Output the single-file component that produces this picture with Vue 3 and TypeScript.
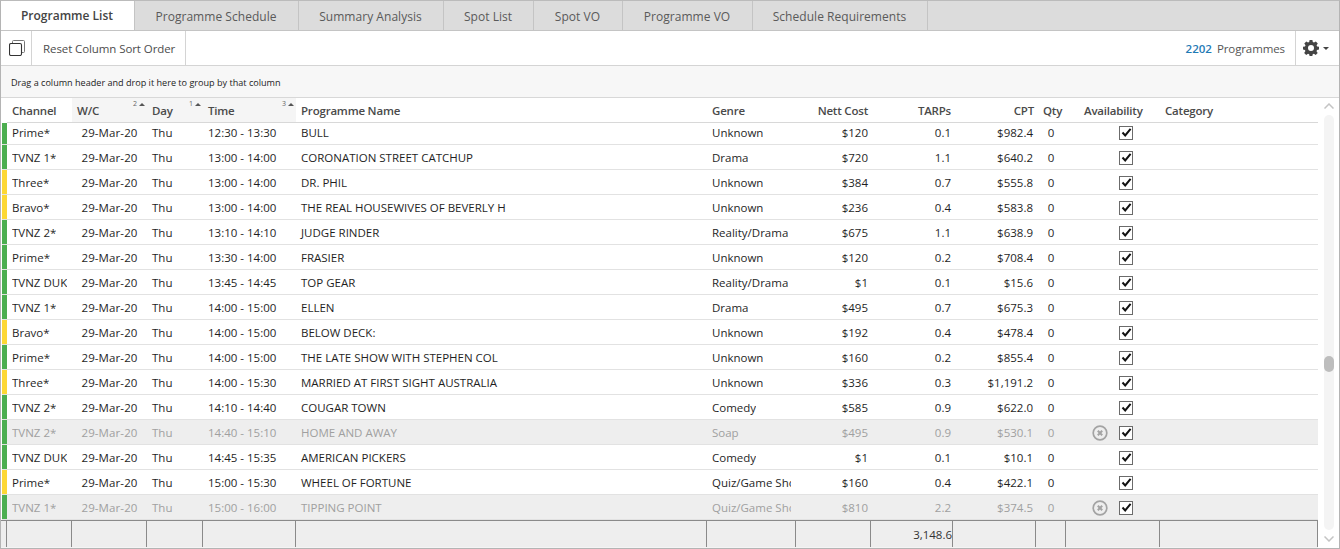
<script setup lang="ts">
interface Row {
  channel: string; time: string; name: string; genre: string; cost: string;
  tarps: string; cpt: string; strip: 'g' | 'y'; off?: boolean;
}
const tabs = ['Programme List', 'Programme Schedule', 'Summary Analysis', 'Spot List', 'Spot VO', 'Programme VO', 'Schedule Requirements'];
const headers = [
  { label: 'Channel', cls: '' },
  { label: 'W/C', cls: 'sorted', sort: '2' },
  { label: 'Day', cls: 'sorted', sort: '1' },
  { label: 'Time', cls: 'sorted', sort: '3' },
  { label: 'Programme Name', cls: '' },
  { label: 'Genre', cls: '' },
  { label: 'Nett Cost', cls: 'right nett' },
  { label: 'TARPs', cls: 'right' },
  { label: 'CPT', cls: 'right' },
  { label: 'Qty', cls: 'center' },
  { label: 'Availability', cls: 'avail-h' },
  { label: 'Category', cls: '' },
];
const rows: Row[] = [
  { channel: 'Prime*', time: '12:30 - 13:30', name: 'BULL', genre: 'Unknown', cost: '$120', tarps: '0.1', cpt: '$982.4', strip: 'g' },
  { channel: 'TVNZ 1*', time: '13:00 - 14:00', name: 'CORONATION STREET CATCHUP', genre: 'Drama', cost: '$720', tarps: '1.1', cpt: '$640.2', strip: 'g' },
  { channel: 'Three*', time: '13:00 - 14:00', name: 'DR. PHIL', genre: 'Unknown', cost: '$384', tarps: '0.7', cpt: '$555.8', strip: 'y' },
  { channel: 'Bravo*', time: '13:00 - 14:00', name: 'THE REAL HOUSEWIVES OF BEVERLY H', genre: 'Unknown', cost: '$236', tarps: '0.4', cpt: '$583.8', strip: 'y' },
  { channel: 'TVNZ 2*', time: '13:10 - 14:10', name: 'JUDGE RINDER', genre: 'Reality/Drama', cost: '$675', tarps: '1.1', cpt: '$638.9', strip: 'g' },
  { channel: 'Prime*', time: '13:30 - 14:00', name: 'FRASIER', genre: 'Unknown', cost: '$120', tarps: '0.2', cpt: '$708.4', strip: 'g' },
  { channel: 'TVNZ DUKE', time: '13:45 - 14:45', name: 'TOP GEAR', genre: 'Reality/Drama', cost: '$1', tarps: '0.1', cpt: '$15.6', strip: 'g' },
  { channel: 'TVNZ 1*', time: '14:00 - 15:00', name: 'ELLEN', genre: 'Drama', cost: '$495', tarps: '0.7', cpt: '$675.3', strip: 'g' },
  { channel: 'Bravo*', time: '14:00 - 15:00', name: 'BELOW DECK:', genre: 'Unknown', cost: '$192', tarps: '0.4', cpt: '$478.4', strip: 'y' },
  { channel: 'Prime*', time: '14:00 - 15:00', name: 'THE LATE SHOW WITH STEPHEN COL', genre: 'Unknown', cost: '$160', tarps: '0.2', cpt: '$855.4', strip: 'g' },
  { channel: 'Three*', time: '14:00 - 15:30', name: 'MARRIED AT FIRST SIGHT AUSTRALIA', genre: 'Unknown', cost: '$336', tarps: '0.3', cpt: '$1,191.2', strip: 'y' },
  { channel: 'TVNZ 2*', time: '14:10 - 14:40', name: 'COUGAR TOWN', genre: 'Comedy', cost: '$585', tarps: '0.9', cpt: '$622.0', strip: 'g' },
  { channel: 'TVNZ 2*', time: '14:40 - 15:10', name: 'HOME AND AWAY', genre: 'Soap', cost: '$495', tarps: '0.9', cpt: '$530.1', strip: 'g', off: true },
  { channel: 'TVNZ DUKE', time: '14:45 - 15:35', name: 'AMERICAN PICKERS', genre: 'Comedy', cost: '$1', tarps: '0.1', cpt: '$10.1', strip: 'g' },
  { channel: 'Prime*', time: '15:00 - 15:30', name: 'WHEEL OF FORTUNE', genre: 'Quiz/Game Show', cost: '$160', tarps: '0.4', cpt: '$422.1', strip: 'y' },
  { channel: 'TVNZ 1*', time: '15:00 - 16:00', name: 'TIPPING POINT', genre: 'Quiz/Game Show', cost: '$810', tarps: '2.2', cpt: '$374.5', strip: 'g', off: true },
];
const footer = ['', '', '', '', '', '', '', '3,148.6', '', '', '', ''];
</script>

<template>
  <div class="app">
    <nav class="tabs">
      <div v-for="(t, i) in tabs" :key="t" class="tab" :class="[`tab${i}`, { active: i === 0 }]">{{ t }}</div>
    </nav>

    <div class="toolbar">
      <button class="tool icon-tool" aria-label="Copy">
        <svg width="16" height="16" viewBox="0 0 16 16" fill="none" stroke="#333">
          <path d="M3.5 3V1.5a1 1 0 0 1 1-1h10a1 1 0 0 1 1 1v10a1 1 0 0 1-1 1H13" stroke="#777" />
          <rect x="0.5" y="3.5" width="12" height="12" rx="1.5" stroke-width="1.1" />
        </svg>
      </button>
      <button class="tool reset">Reset Column Sort Order</button>
      <div class="count"><b>2202</b><span>Programmes</span></div>
      <button class="gear" aria-label="Settings">
        <svg width="16" height="16" viewBox="0 0 16 16">
          <path fill="#444" fill-rule="evenodd" d="M6.6 0h2.8l.4 2.1 1.2.5L12.8 1.4l2 2-1.2 1.8.5 1.2 1.9.4v2.8l-2 .4-.5 1.2 1.2 1.8-2 2-1.8-1.2-1.2.5-.4 1.9H6.6l-.4-2-1.2-.5-1.8 1.2-2-2 1.2-1.8-.5-1.2-1.9-.4V6.8l2-.4.5-1.2L1.3 3.4l2-2L5 2.6l1.2-.5zM8 5a3 3 0 1 0 0 6 3 3 0 0 0 0-6z" />
        </svg>
        <i class="caret"></i>
      </button>
    </div>

    <div class="group-panel">Drag a column header and drop it here to group by that column</div>

    <div class="body">
      <div class="grid">
        <div class="line head">
          <div v-for="h in headers" :key="h.label" class="hcell" :class="h.cls">
            {{ h.label }}
            <span v-if="h.sort" class="sort">{{ h.sort }}<i></i></span>
          </div>
        </div>
        <div class="viewport">
          <div class="rows">
            <div v-for="(r, i) in rows" :key="i" class="row" :class="{ off: r.off }">
              <div class="strip" :class="r.strip"></div>
              <div class="line cells">
                <div class="cell"><span class="clip ch">{{ r.channel }}</span></div>
                <div class="cell center date">29-Mar-20</div>
                <div class="cell">Thu</div>
                <div class="cell">{{ r.time }}</div>
                <div class="cell">{{ r.name }}</div>
                <div class="cell"><span class="clip gn">{{ r.genre }}</span></div>
                <div class="cell right nett">{{ r.cost }}</div>
                <div class="cell right">{{ r.tarps }}</div>
                <div class="cell right cpt">{{ r.cpt }}</div>
                <div class="cell center">0</div>
                <div class="cell avail">
                  <svg v-if="r.off" class="x" width="16" height="16" viewBox="0 0 16 16">
                    <circle cx="8" cy="8" r="6.8" fill="none" stroke="#a3a3a3" stroke-width="1.7" />
                    <path d="M5.8 5.8l4.4 4.4M10.2 5.8l-4.4 4.4" stroke="#a3a3a3" stroke-width="2" />
                  </svg>
                  <span class="check">
                    <svg width="11" height="11" viewBox="0 0 11 11">
                      <path d="M1.5 5.5L4.2 8.4 9.6 1.8" fill="none" stroke="#111" stroke-width="2" />
                    </svg>
                  </span>
                </div>
                <div class="cell"></div>
              </div>
            </div>
          </div>
        </div>
        <div class="foot">
          <div class="foot-gap"></div>
          <div class="line foot-cells">
            <div v-for="(f, i) in footer" :key="i" class="fcell">{{ f }}</div>
          </div>
        </div>
      </div>
      <div class="scrollbar">
        <svg class="chev" width="10" height="6" viewBox="0 0 10 6"><path d="M0.5 5.5L5 1l4.5 4.5" fill="none" stroke="#c4c4c4" stroke-width="1.5" /></svg>
        <div class="track"><div class="thumb"></div></div>
        <svg class="chev" width="10" height="6" viewBox="0 0 10 6"><path d="M0.5 0.5L5 5l4.5-4.5" fill="none" stroke="#c4c4c4" stroke-width="1.5" /></svg>
      </div>
    </div>
  </div>
</template>

<style>
html, body { margin: 0; background: #fff; }
</style>

<style scoped>
.app {
  width: 1340px; height: 549px; box-sizing: border-box; border: 1px solid #b4b4b4; border-top-color: #bbb;
  font-family: "Open Sans", "Noto Sans", sans-serif; font-size: 11.5px; color: #1f1f1f;
  display: flex; flex-direction: column; overflow: hidden; background: #fff;
}
.tabs { height: 30px; box-sizing: border-box; flex: none; display: flex; background: #dcdcdc; border-bottom: 1px solid #c4c4c4; }
.tab {
  box-sizing: border-box; display: flex; align-items: center; justify-content: center; color: #5a5a5a;
  border-right: 1px solid #c4c4c4; font-size: 12px; height: 30px; padding-right: 1px; letter-spacing: 0.04px;
}
.tab.active { background: #fff; color: #444; font-weight: 600; height: 29px; letter-spacing: 0; }
.tab0 { width: 134px; } .tab1 { width: 164px; } .tab2 { width: 145px; } .tab3 { width: 90px; }
.tab4 { width: 89px; } .tab5 { width: 130px; } .tab6 { width: 175px; }

.toolbar { height: 35px; box-sizing: border-box; flex: none; display: flex; align-items: stretch; border-bottom: 1px solid #d4d4d4; }
.tool {
  border: 0; border-right: 1px solid #d4d4d4; background: #fff; padding: 0 10px; font: inherit; color: #4d4d4d;
  display: flex; align-items: center;
}
.icon-tool { width: 31px; padding: 0 0 0 8px; box-sizing: border-box; }
.reset { width: 154px; box-sizing: border-box; padding-left: 11px; white-space: nowrap; letter-spacing: -0.09px; }
.count { margin-left: auto; display: flex; align-items: center; gap: 5px; color: #555; padding-right: 10px; }
.count span { letter-spacing: -0.1px; }
.count b { color: #1f7ab5; font-weight: 600; }
.gear { width: 44px; border: 0; border-left: 1px solid #d4d4d4; background: #fff; display: flex; align-items: center; padding: 0 0 0 7px; gap: 4px; }
.caret { width: 0; height: 0; border: 3px solid transparent; border-top: 3px solid #444; border-bottom: 0; }

.group-panel {
  height: 32px; flex: none; box-sizing: border-box; background: #f7f7f7; border-bottom: 1px solid #d8d8d8;
  display: flex; align-items: center; padding: 1px 0 0 10px; font-size: 9.08px; color: #222;
}

.body { flex: 1; min-height: 0; display: flex; }
.grid { width: 1317px; flex: none; display: flex; flex-direction: column; }
.line {
  display: grid;
  grid-template-columns: 65px 75px 56px 93px 411px 89px 75px 82px 83px 30px 94px 158px;
}
.head { height: 25px; flex: none; margin-left: 6px; box-sizing: border-box; }
.hcell {
  position: relative; display: flex; align-items: center; padding: 0 5px; color: #4a4a4a; font-weight: 600;
  letter-spacing: -0.2px; border-bottom: 1px solid #d8d8d8; white-space: nowrap; padding-top: 1px;
}
.hcell.sorted { background: #f5f5f5; }
.hcell.right { justify-content: flex-end; padding-right: 2px; }
.hcell.right.nett { padding-right: 3px; }
.hcell.center { padding: 0 0 0 7px; }
.hcell.avail-h { padding-left: 18px; }
.sort { position: absolute; top: 2px; right: 2px; display: flex; align-items: center; gap: 2px; font-size: 7px; font-weight: 400; letter-spacing: 0; color: #666; line-height: 8px; }
.sort i { width: 0; height: 0; border: 3px solid transparent; border-bottom: 3px solid #555; border-top: 0; }

.viewport { height: 397px; flex: none; overflow: hidden; }
.rows { margin-top: -3px; }
.row { height: 25px; box-sizing: border-box; display: flex; border-bottom: 1px solid #e2e2e2; margin-left: 1px; }
.strip { width: 5px; flex: none; }
.strip.g { background: #4cae50; }
.strip.y { background: #fdd835; }
.cells { flex: 1; height: 24px; }
.cell { display: flex; align-items: center; padding: 0 5px; white-space: nowrap; overflow: hidden; min-width: 0; color: #1f1f1f; }
.cell.center { justify-content: center; padding: 0; }
.cell.date { letter-spacing: 0.1px; }
.cell.right { justify-content: flex-end; padding: 0 2px 0 0; }
.cell.right.nett { padding-right: 3px; }
.cell.cpt { padding-right: 3px; }
.clip { overflow: hidden; display: block; }
.clip.ch { max-width: 55px; }
.clip.gn { max-width: 80px; }
.row.off { background: #eee; }
.row.off .cell { color: #a0a0a0; }
.avail { justify-content: flex-start; padding: 0 0 0 53px; position: relative; overflow: visible; }
.x { position: absolute; left: 26px; top: 5px; }
.check {
  width: 12px; height: 12px; margin-top: 1px; border: 1px solid #6b6b6b; background: #fff; display: flex; align-items: center; justify-content: center;
}

.foot { flex: 1; display: flex; border-top: 1px solid #8a8a8a; background: #eee; min-height: 0; border-bottom: 1px solid #f4f4f4; }
.foot-gap { width: 5px; flex: none; border-right: 1px solid #8a8a8a; }
.foot-cells { flex: 1; height: 100%; }
.fcell {
  border-right: 1px solid #8a8a8a; display: flex; align-items: center; justify-content: flex-end;
  color: #333; height: 26px; box-sizing: border-box;
}

.scrollbar { flex: 1; display: flex; flex-direction: column; align-items: center; padding: 5px 0 6px; }
.chev { flex: none; }
.track { width: 10px; flex: 1; margin: 6px 0; background: #f4f4f4; border-radius: 5px; position: relative; }
.thumb { position: absolute; top: 241px; left: 0; width: 10px; height: 16px; background: #bdbdbd; border-radius: 5px; }
</style>
